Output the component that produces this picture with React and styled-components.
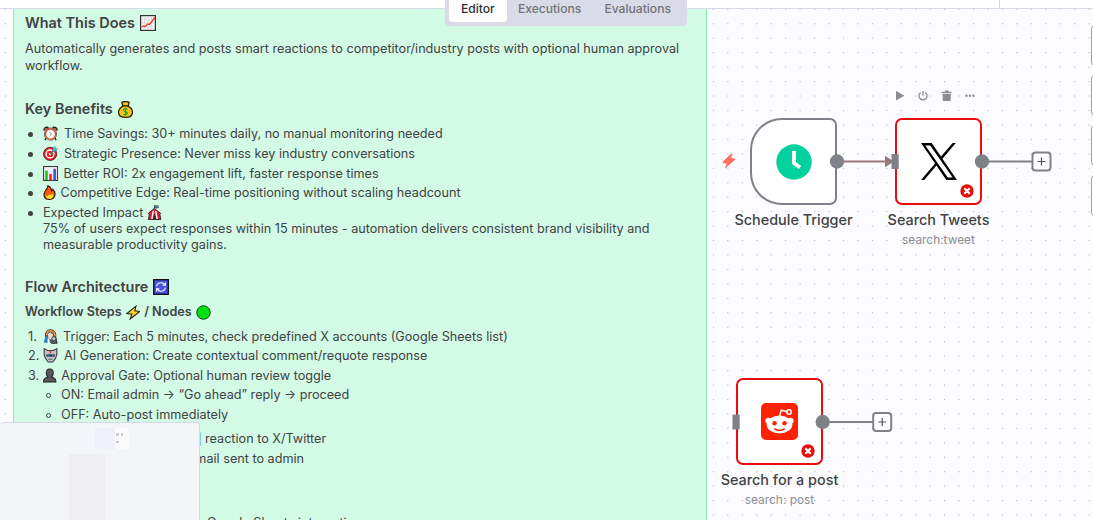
import React from 'react';
import styled, { createGlobalStyle } from 'styled-components';

const Global = createGlobalStyle`
  * { box-sizing: border-box; }
  html, body { margin: 0; padding: 0; overflow: hidden; }
  body { font-family: Inter, "Liberation Sans", sans-serif; color: #414244; }
`;

const Page = styled.div`
  position: relative;
  width: 1093px;
  height: 520px;
  overflow: hidden;
  background: #fcfcff;
`;

const Layer = styled.svg`
  position: absolute;
  left: 0;
  top: 0;
  width: 100%;
  height: 100%;
`;

const Header = styled.header`
  position: relative;
  z-index: 3;
  height: 9px;
  background: #fff;
  border-bottom: 1px solid #d9dae8;
  display: flex;
  justify-content: flex-end;
`;

const HeaderSide = styled.div`
  width: 94px;
  border-left: 1px solid #d9dae8;
`;

const Tabs = styled.nav`
  position: absolute;
  left: 445px;
  top: -9px;
  width: 242px;
  height: 35px;
  padding: 4px;
  display: flex;
  border-radius: 4px;
  background: #dadbe8;
`;

const Tab = styled.a`
  width: ${p => p.$w}px;
  line-height: 28px;
  height: 27px;
  text-align: center;
  font-size: 12.1px;
  font-weight: 500;
  border-radius: 4px;
  color: ${p => (p.$active ? '#2e2f33' : '#727378')};
  background: ${p => (p.$active ? '#fff' : 'transparent')};
`;

const Sticky = styled.article`
  position: absolute;
  left: 13px;
  top: 0;
  width: 694px;
  height: 530px;
  padding: 10px 15px 0 11px;
  background: #d3fae5;
  border: 1px solid #8beab8;
  font-size: 12.65px;
  line-height: 16px;
`;

const Heading = styled.h3`
  margin: 0;
  height: 24px;
  display: flex;
  align-items: center;
  gap: ${p => (p.$small ? 4 : 5)}px;
  font-size: ${p => (p.$small ? 12.64 : 14.45)}px;
  font-weight: 600;
  margin-top: ${p => p.$mt || 0}px;
`;

const Paragraph = styled.p`
  margin: 5px 0 0;
  line-height: 17px;
`;

const List = styled.ul`
  list-style: none;
  margin: ${p => p.$mt || 0}px 0 0;
  padding: 0 0 0 ${p => p.$indent || 0}px;
`;

const Row = styled.li`
  display: flex;
  margin-bottom: ${p => p.$gap ?? 3.7}px;
`;

const Marker = styled.span`
  width: 18px;
  flex: none;
  padding-left: 3px;
`;

const Bullet = styled.span`
  display: block;
  width: 5px;
  height: 5px;
  margin: 6px 0 0 0;
  border-radius: 50%;
  background: ${p => (p.$open ? 'transparent' : '#414244')};
  border: ${p => (p.$open ? '1px solid #414244' : 'none')};
`;

const Emoji = styled.svg`
  display: inline-block;
  width: ${p => p.$w || 15}px;
  height: ${p => p.$h || 15}px;
  margin-right: ${p => p.$mr ?? 6}px;
  vertical-align: -3px;
  flex: none;
`;

const Minimap = styled.aside`
  position: absolute;
  z-index: 2;
  left: 0;
  top: 422px;
  width: 200px;
  height: 110px;
  background: #f4f5f8;
  border: 1px solid #d8d9e6;
  border-left: 0;
  border-radius: 4px;
  svg { display: block; }
`;

const NodeBox = styled.section`
  position: absolute;
  left: ${p => p.$x}px;
  top: ${p => p.$y}px;
  width: 87px;
  height: 87px;
  display: flex;
  align-items: center;
  justify-content: center;
  background: #fff;
  border: 2px solid ${p => (p.$trigger ? '#7f8188' : '#ea0b0b')};
  border-radius: ${p => (p.$trigger ? '32px 7px 7px 32px' : '7px')};
`;

const Caption = styled.div`
  position: absolute;
  top: 90px;
  left: 50%;
  transform: translateX(-50%);
  text-align: center;
  white-space: nowrap;
`;

const Name = styled.div`
  font-size: 14.4px;
  line-height: 20px;
  font-weight: 500;
`;

const Sub = styled.div`
  font-size: 11.9px;
  line-height: 16px;
  margin-top: 2px;
  color: #8c8d93;
`;

const Badge = styled.svg`
  position: absolute;
  right: 6px;
  bottom: 5px;
`;

const Side = styled.div`
  position: absolute;
  left: 1091px;
  top: 25px;
  display: flex;
  flex-direction: column;
  gap: 9px;
`;

const SideButton = styled.button`
  width: 41px;
  height: 41px;
  padding: 0;
  background: #fff;
  border: 1px solid #9d9eac;
  border-radius: 4px;
`;

const art = {
  chart: <><rect x=".6" y=".6" width="14.8" height="14.8" fill="#f5f3f3" stroke="#333" strokeWidth="1.2" /><path d="M4.5 1v14M8 1v14M11.5 1v14M1 4.5h14M1 8h14M1 11.5h14" stroke="#d5cfd2" strokeWidth=".6" /><path d="M1.5 12l2-1 1.5.6L8 9l1.5.5L15 2.5" fill="none" stroke="#f03a17" strokeWidth="1.3" /></>,
  money: <><path d="M5.5 4.8L4.6 1.2Q8 -.2 11.4 1.2l-.9 3.6Q14.6 7 14.6 10.6 14.3 15.4 8 15.4T1.4 10.6Q1.6 7 5.5 4.8z" fill="#f9c51c" stroke="#2a2205" strokeWidth="1.2" /><path d="M5 4.6h6" stroke="#2a2205" strokeWidth="1.3" /><path d="M10 7.8Q8 6.7 6.6 7.8T8 10t1.2 2.2T6 12.4M8 6.3v7.5" stroke="#1aa81a" strokeWidth="1.1" fill="none" /></>,
  clock: <><path d="M1 5Q.6 1.2 5 1.2L6 3M15 5q.4-3.8-4-3.8L10 3" fill="#c9685a" stroke="#222" strokeWidth="1.2" /><path d="M3.5 12.5L2 15M12.5 12.5L14 15" stroke="#222" strokeWidth="1.4" /><circle cx="8" cy="8.6" r="6.5" fill="#fff" stroke="#222" strokeWidth=".7" /><circle cx="8" cy="8.6" r="5.4" fill="#fff" stroke="#e8421f" strokeWidth="1.4" /><path d="M6.8 6.3l2.3 2.3-1.8 1.5" fill="none" stroke="#555" strokeWidth=".8" /></>,
  target: <><circle cx="7.6" cy="8.4" r="7.1" fill="#ed1c24" stroke="#222" strokeWidth=".8" /><circle cx="7.5" cy="8.5" r="4.2" fill="none" stroke="#fff" strokeWidth="1.5" /><circle cx="7.5" cy="8.5" r="1.3" fill="#fff" /><path d="M7.5 8.5L12 4" stroke="#3e7390" strokeWidth="1.5" /><path d="M10.5 5.5V3L13 .5v2.6h2.6L13 5.5z" fill="#4bc2ed" stroke="#315f73" strokeWidth=".5" /></>,
  bars: <><rect x=".6" y=".6" width="14.8" height="14.8" fill="#f6f4f5" stroke="#333" strokeWidth="1.1" /><path d="M2.3 15V5h2.8v10z" fill="#15c815" /><path d="M6.7 15V8.5h2.6V15z" fill="#ed1c24" /><path d="M11 15V3h2.8v12z" fill="#4450df" /></>,
  fire: <><path d="M6.2.8q-.3 3-2.6 5Q1.8 8.5 2 11q.8 4.4 6 4.4 5-.3 5.8-4.8Q14 7 11.5 4.5q-.4 1.6-1.4 1.8Q10 2.4 6.2.8z" fill="#f9570b" stroke="#2b1307" strokeWidth="1.1" /><path d="M4 11q0 3.7 4 3.8 3.8-.2 4-4.3l-1-1.5-1.5 2L8 9.5 6 12z" fill="#ffe520" /></>,
  tent: <><path d="M8 .5v3M1.3 9l6.5-5.3L14.7 9l-1 1 1 5.4H1.5l1-5.4z" fill="#e0203a" stroke="#222" /><path d="M8 .8h4v2.4H8z" fill="#35a9bb" stroke="#222" strokeWidth=".6" /><path d="M6 6.5L4.5 15H6l1.5-9zM10 6.5l1.5 8.5H10L8.5 6z" fill="#fff" /><path d="M8 9l1.6 6H6.4z" fill="#5b1421" /></>,
  sync: <><rect x=".7" y=".7" width="14.6" height="14.6" fill="#4553e6" stroke="#111" strokeWidth="1.4" /><path d="M3.6 7.4Q4.4 3.8 8 3.8q2.5 0 3.8 2.1M12.4 8.6Q11.6 12.2 8 12.2q-2.5 0-3.8-2.1M12.4 3.5v2.8H9.6M3.6 12.5V9.7h2.8" stroke="#fff" strokeWidth="1.1" fill="none" /></>,
  bolt: <path d="M11 .9L.9 9.2l5.5.8-1.8 5.2L15.2 6.8l-5.4-.8z" fill="#ffd51b" stroke="#222" strokeWidth="1.2" />,
  green: <circle cx="8" cy="8" r="7.2" fill="#00e010" stroke="#163b19" strokeWidth="1" />,
  agent: <><path d="M2.6 8Q2 1 8.2.8 14.3 1 13.6 9l1.4 6.2H9L5 11z" fill="#59616b" stroke="#222" /><path d="M3.6 6.5Q4 2 8.2 2t4.8 6" fill="none" stroke="#ee873c" strokeWidth="1.7" /><path d="M5 5.2l3-1.4 2.5 2v5H6z" fill="#e8ddd0" /><path d="M.8 14.5L2.5 8 5 7.5l1 7.5z" fill="#247fc3" /><path d="M5 9.5l2 2v3.5H4.8z" fill="#fff" /><circle cx="11.6" cy="10.4" r="2.2" fill="#c8ccd0" stroke="#333" /></>,
  robot: <><path d="M1.2.7L5 2.7h6l3.8-2v6L13.4 11 10.5 15h-5L2.6 11 1.2 7z" fill="#c1c5ca" stroke="#343638" strokeWidth="1.1" /><path d="M3.5 6.8h9v2.4h-9z" fill="#272b34" /><path d="M4.5 7.2h2v1.5h-2zM9.5 7.2h2v1.5h-2z" fill="#2b8ac9" /><path d="M8 2.6v3" stroke="#ed2b25" strokeWidth="1.7" /><path d="M5.8 12h4.4" stroke="#555" /></>,
  person: <path d="M8 .9q4 0 3.8 4.2Q11.6 8.6 10 10q4.8.3 4.8 5.2H1.2Q1.2 10.3 6 10 4.4 8.6 4.2 5.1 4 .9 8 .9z" fill="#585858" stroke="#222" strokeWidth="1.1" />,
  keycap: <rect width="5" height="14" fill="#79d3e8" />,
};

const E = ({ n, w, h, mr, box = '0 0 16 16' }) => (
  <Emoji viewBox={box} $w={w} $h={h} $mr={mr}>{art[n]}</Emoji>
);

const benefits = [
  ['clock', 'Time Savings: 30+ minutes daily, no manual monitoring needed'],
  ['target', 'Strategic Presence: Never miss key industry conversations'],
  ['bars', 'Better ROI: 2x engagement lift, faster response times', 15, 5.6],
  ['fire', 'Competitive Edge: Real-time positioning without scaling headcount', 13, 4.5, '1.3 0 13.2 16'],
];

const steps = [
  ['agent', 'Trigger: Each 5 minutes, check predefined X accounts (Google Sheets list)', 15, 5],
  ['robot', 'AI Generation: Create contextual comment/requote response'],
  ['person', 'Approval Gate: Optional human review toggle', 13.5, 4.8, '.6 0 14.8 16'],
];

const Tail = styled.div`
  padding-left: ${p => p.$x}px;
  margin-top: ${p => p.$mt}px;
  white-space: nowrap;
`;

const ErrorBadge = () => (
  <Badge width="14" height="14" viewBox="0 0 14 14">
    <circle cx="7" cy="7" r="6.7" fill="#ea0b0b" />
    <path d="M4.3 4.3l5.4 5.4M9.7 4.3L4.3 9.7" stroke="#fff" strokeWidth="2.2" />
  </Badge>
);

const Node = ({ x, y, trigger, name, sub, children }) => (
  <NodeBox $x={x} $y={y} $trigger={trigger}>
    {children}
    {!trigger && <ErrorBadge />}
    <Caption>
      <Name>{name}</Name>
      {sub && <Sub>{sub}</Sub>}
    </Caption>
  </NodeBox>
);

const Plus = ({ x, y }) => (
  <g>
    <path d={`M${x - 58} ${y}h50`} stroke="#7f8188" strokeWidth="2" />
    <rect x={x - 9} y={y - 9} width="18" height="18" rx="3" fill="#fff" stroke="#7f8188" strokeWidth="2" />
    <path d={`M${x - 4} ${y}h8M${x} ${y - 4}v8`} stroke="#525356" strokeWidth="1.2" />
  </g>
);

export default function App() {
  return (
    <Page>
      <Global />
      <Layer>
        <defs>
          <pattern id="dots" x="4.8" y="8.8" width="14.45" height="14.45" patternUnits="userSpaceOnUse">
            <circle cx=".6" cy=".6" r=".6" fill="#a0a1a7" />
          </pattern>
        </defs>
        <rect width="1093" height="520" fill="url(#dots)" />
      </Layer>

      <Header>
        <HeaderSide />
        <Tabs>
          <Tab $w={58} $active>Editor</Tab>
          <Tab $w={86}>Executions</Tab>
          <Tab $w={91}>Evaluations</Tab>
        </Tabs>
      </Header>

      <Sticky>
        <Heading>What This Does <E n="chart" w={16} h={16} /></Heading>
        <Paragraph>Automatically generates and posts smart reactions to competitor/industry posts with optional human approval workflow.</Paragraph>
        <Heading $mt={23}>Key Benefits <E n="money" w={15} h={17} box="1 0 14 16" /></Heading>
        <List $mt={5.2}>
          {benefits.map(([icon, text, w, mr, box]) => (
            <Row key={icon}>
              <Marker><Bullet /></Marker>
              <E n={icon} w={w} mr={mr} box={box} />{text}
            </Row>
          ))}
          <Row $gap={0}>
            <Marker><Bullet /></Marker>
            <div>
              Expected Impact <E n="tent" mr={0} /><br />
              75% of users expect responses within 15 minutes - automation delivers consistent brand visibility and measurable productivity gains.
            </div>
          </Row>
        </List>
        <Heading $mt={22.3}>Flow Architecture <E n="sync" w={16} h={16} /></Heading>
        <Heading $small $mt={1}>Workflow Steps <E n="bolt" w={14.5} mr={0} /> / Nodes <E n="green" w={15} /></Heading>
        <List as="ol" $mt={4.6}>
          {steps.map(([icon, text, w, mr, box], i) => (
            <Row key={icon} $gap={3.5}>
              <Marker>{i + 1}.</Marker>
              <E n={icon} w={w} mr={mr} box={box} />{text}
            </Row>
          ))}
        </List>
        <List $indent={18}>
          <Row $gap={3.5}><Marker><Bullet $open /></Marker>ON: Email admin → “Go ahead” reply → proceed</Row>
          <Row $gap={0}><Marker><Bullet $open /></Marker>OFF: Auto-post immediately</Row>
        </List>
        <Tail $x={171} $mt={8.4}><E n="keycap" w={5} h={14} mr={4} box="0 0 5 14" />reaction to X/Twitter</Tail>
        <Tail $x={163} $mt={4}>email sent to admin</Tail>
        <Tail $x={182} $mt={48}>Google Sheets integration</Tail>
      </Sticky>

      <Node x={750} y={118} trigger name="Schedule Trigger">
        <svg width="36" height="36" viewBox="0 0 36 36">
          <circle cx="18" cy="18" r="17.7" fill="#00d19d" />
          <path d="M18 7v12l6 4.5" fill="none" stroke="#fff" strokeWidth="4" />
        </svg>
      </Node>
      <Node x={895} y={118} name="Search Tweets" sub="search:tweet">
        <svg width="36" height="37" viewBox="0 0 1200 1227">
          <path d="M714.163 519.284L1160.89 0H1055.03L667.137 450.887L357.328 0H0L468.492 681.821L0 1226.37H105.866L515.491 750.218L842.672 1226.37H1200L714.137 519.284H714.163ZM569.165 687.828L521.697 619.934L144.011 79.6944H306.615L611.412 515.685L658.88 583.579L1055.08 1150.3H892.476L569.165 687.854V687.828Z" />
        </svg>
      </Node>
      <Node x={736} y={378} name="Search for a post" sub="search: post">
        <svg width="37" height="37" viewBox="0 0 37 37">
          <rect width="37" height="37" rx="5" fill="#ff2200" />
          <path d="M18.5 13l1.8-5.8 6 1.6" fill="none" stroke="#fff" strokeWidth="1.5" />
          <circle cx="28" cy="9" r="2.2" fill="none" stroke="#fff" strokeWidth="1.6" />
          <circle cx="7.5" cy="17.8" r="3.1" fill="#fff" />
          <circle cx="29.5" cy="17.8" r="3.1" fill="#fff" />
          <ellipse cx="18.5" cy="21.5" rx="12.8" ry="9" fill="#fff" />
          <circle cx="13.5" cy="20.3" r="2.2" fill="#ff2200" />
          <circle cx="23.5" cy="20.3" r="2.2" fill="#ff2200" />
          <path d="M13.3 25.7q5.2 3.5 10.4 0" fill="none" stroke="#ff2200" strokeWidth="1.4" />
        </svg>
      </Node>

      <Layer>
        <path d="M731.5 153.8L722.6 162.3l4.6 1.2-1.8 4.3L735.2 159.2l-4.6-1.2 1.6-4z" fill="#ff6f5c" stroke="#ff6f5c" strokeWidth=".8" strokeLinejoin="round" />
        <path d="M837 161.5h50" stroke="#96787b" strokeWidth="2" />
        <path d="M885 155.8v11.4l9-5.7z" fill="#96787b" />
        <rect x="891.5" y="154" width="7.2" height="15" fill="#7f8188" />
        <circle cx="837" cy="161.5" r="7.2" fill="#7f8188" />
        <Plus x={1041.5} y={161.5} />
        <circle cx="982" cy="161.5" r="7.2" fill="#7f8188" />
        <rect x="732.5" y="414.5" width="7.2" height="15" fill="#7f8188" />
        <Plus x={882.2} y={422} />
        <circle cx="822.7" cy="422" r="7.2" fill="#7f8188" />
        <g fill="#8b8c92">
          <path d="M896 90.8l8.3 4.9L896 100.6z" />
          <path d="M941.8 91.7h3l.6-1.2h2.8l.6 1.2h2.7v1.5h-9.7zM942.5 94h8.4l-.4 7h-7.6z" />
          <circle cx="966.5" cy="95.7" r="1.2" />
          <circle cx="970" cy="95.7" r="1.2" />
          <circle cx="973.5" cy="95.7" r="1.2" />
        </g>
        <path d="M920.7 92.6a4 4 0 1 0 4.6 0M923 91v4.8" fill="none" stroke="#8b8c92" strokeWidth="1.3" />
      </Layer>

      <Side>
        <SideButton /><SideButton /><SideButton /><SideButton />
      </Side>

      <Minimap>
        <svg width="199" height="98">
          <rect x="93" y="5" width="36" height="21" fill="#fafafd" />
          <rect x="94" y="5" width="21" height="21" fill="#eff0f8" />
          <path d="M116 10h3v3h-3zM121 10h2v3h-2zM116 18h3v2h-3z" fill="#c7c8d8" />
          <rect x="69" y="31" width="36" height="67" fill="#efeff1" />
        </svg>
      </Minimap>
    </Page>
  );
}
